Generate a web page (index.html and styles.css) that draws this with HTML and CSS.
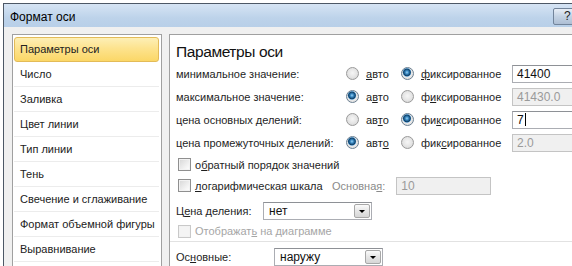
FILE: index.html
```html
<!DOCTYPE html>
<html lang="ru">
<head>
  <meta charset="UTF-8" />
  <title>Формат оси</title>
  <link rel="stylesheet" href="styles.css">
</head>
<body>

  <div class="dialog">
    <div class="titlebar">
      <span class="title">Формат оси</span>
      <span class="help">?</span>
    </div>

    <div class="content">
      <ul class="nav">
        <li class="active">Параметры оси</li>
        <li>Число</li>
        <li>Заливка</li>
        <li>Цвет линии</li>
        <li>Тип линии</li>
        <li>Тень</li>
        <li>Свечение и сглаживание</li>
        <li>Формат объемной фигуры</li>
        <li>Выравнивание</li>
      </ul>

      <div class="pane">
        <h1>Параметры оси</h1>

        <div class="bounds">
          <span class="label">минимальное значение:</span>
          <span class="opt"><i class="radio"></i><span><u>а</u>вто</span></span>
          <span class="opt"><i class="radio on"></i><span><u>ф</u>иксированное</span></span>
          <span class="field">41400</span>

          <span class="label">максимальное значение:</span>
          <span class="opt"><i class="radio on"></i><span>а<u>в</u>то</span></span>
          <span class="opt"><i class="radio"></i><span>ф<u>и</u>ксированное</span></span>
          <span class="field disabled">41430.0</span>

          <span class="label">цена основных делений:</span>
          <span class="opt"><i class="radio"></i><span>ав<u>т</u>о</span></span>
          <span class="opt"><i class="radio on"></i><span>фи<u>к</u>сированное</span></span>
          <span class="field">7<b class="caret"></b></span>

          <span class="label">цена промежуточных делений:</span>
          <span class="opt"><i class="radio on"></i><span>авт<u>о</u></span></span>
          <span class="opt"><i class="radio"></i><span>фик<u>с</u>ированное</span></span>
          <span class="field disabled">2.0</span>
        </div>

        <div class="check-row">
          <i class="checkbox"></i>
          <span>о<u>б</u>ратный порядок значений</span>
        </div>
        <div class="check-row">
          <i class="checkbox"></i>
          <span class="check-text"><u>л</u>огарифмическая шкала</span>
          <span class="muted">Основна<u>я</u>:</span>
          <span class="field small disabled">10</span>
        </div>

        <div class="select-row tick">
          <span class="select-label">Ц<u>е</u>на деления:</span>
          <span class="select">нет<i class="drop"></i></span>
        </div>
        <div class="check-row off">
          <i class="checkbox"></i>
          <span>Отображат<u>ь</u> на диаграмме</span>
        </div>

        <div class="separator"></div>

        <div class="select-row major">
          <span class="select-label">Ос<u>н</u>овные:</span>
          <span class="select">наружу<i class="drop"></i></span>
        </div>
      </div>
    </div>
  </div>

</body>
</html>
```

FILE: styles.css
```css
body {
  margin: 0;
  width: 572px;
  height: 266px;
  overflow: hidden;
  background: #fff;
  font-family: "Liberation Sans", Arial, sans-serif;
  font-size: 11px;
  color: #1e1e1e;
  white-space: nowrap;
}

u {
  text-decoration: underline;
  text-underline-offset: 1px;
}

.dialog {
  margin: 3px 0 0 3px;
  width: 640px;
  height: 320px;
  border: 1px solid #4d5866;
  border-right: none;
  background: #f0f0f0;
}

.titlebar {
  position: relative;
  height: 23px;
  display: flex;
  align-items: center;
  padding-left: 6px;
  background: linear-gradient(#d6e4f4, #bdd3ea 60%, #b8cfe8);
}

.title {
  font-size: 12px;
  color: #000;
  padding-top: 2px;
}

.help {
  position: absolute;
  left: 549px;
  top: 4px;
  width: 26px;
  height: 15px;
  border: 1px solid #72849a;
  border-radius: 2px;
  background: linear-gradient(#e8eef6, #c3d2e3 50%, #aebfd4);
  color: #222;
  font-size: 12px;
  line-height: 15px;
  padding-left: 10px;
  box-sizing: content-box;
}

.content {
  display: flex;
  align-items: flex-start;
  padding: 7px 0 0 8px;
}

/* left navigation list */
.nav {
  list-style: none;
  margin: 0;
  width: 145px;
  height: 260px;
  padding: 2px 2px 0 1px;
  background: #fff;
  border: 1px solid #a0a0a0;
  font-size: 11px;
}

.nav li {
  height: 24px;
  line-height: 24px;
  padding-left: 6px;
  border-bottom: 1px solid #ececec;
  color: #222;
}

.nav li.active {
  height: 23px;
  line-height: 23px;
  padding-left: 5px;
  border: 1px solid #e3bb58;
  border-radius: 3px;
  background: linear-gradient(#fdefb6, #fde38e 45%, #fbd767);
}

/* right pane */
.pane {
  flex: 1;
  height: 260px;
  margin-left: 7px;
  padding: 7px 0 0 6px;
  background: #fff;
  border: 1px solid #a0a0a0;
  border-right: none;
}

.pane h1 {
  margin: 0;
  font-size: 15.5px;
  letter-spacing: -0.4px;
  font-weight: normal;
  line-height: 20px;
  color: #111;
}

.bounds {
  display: grid;
  grid-template-columns: 170px 55px 111px 90px;
  grid-auto-rows: 23px;
  align-items: center;
}

.opt {
  display: flex;
  align-items: center;
  gap: 7px;
}

.radio {
  display: inline-block;
  flex: none;
  width: 13px;
  height: 13px;
  box-sizing: border-box;
  border-radius: 50%;
  border: 1px solid #9a9a9a;
  background: radial-gradient(circle at 50% 45%, #f6f6f6 0, #e4e4e4 55%, #cfcfcf 100%);
}

.radio.on {
  border-color: #6b7f91;
  background:
    radial-gradient(circle at 45% 40%, #9ad2f3 0, #3a8ac4 1.6px, #0f3f66 3.4px, #5d9ccc 4px, transparent 4.6px),
    radial-gradient(circle, #f6f6f6 0, #dadada 100%);
}

.field {
  display: flex;
  align-items: center;
  height: 18px;
  box-sizing: border-box;
  padding-left: 4px;
  border: 1px solid #abadb3;
  border-top-color: #8e9196;
  background: #fff;
  color: #111;
  font-size: 12px;
}

.field.disabled {
  background: #f0f0f0;
  border-color: #c4c4c4;
  color: #9a9a9a;
}

.field.small {
  width: 95px;
  margin-left: 7px;
}

.caret {
  display: inline-block;
  width: 1px;
  height: 13px;
  background: #000;
  margin-left: 1px;
}

.check-row {
  display: flex;
  align-items: center;
  height: 21px;
  padding-left: 2px;
  gap: 4px;
}

.checkbox {
  display: inline-block;
  flex: none;
  width: 13px;
  height: 13px;
  box-sizing: border-box;
  border: 1px solid #8f8f8f;
  background: linear-gradient(135deg, #d6d6d6, #f4f4f4 70%, #fff);
  box-shadow: inset 0 0 0 1px #f2f2f2;
}

.check-text {
  width: 133px;
}

.muted {
  color: #8a8a8a;
}

.check-row.off {
  height: 16px;
  color: #a6a6a6;
}

.check-row.off .checkbox {
  border-color: #c9c9c9;
  background: #f4f4f4;
}

.select-row {
  display: flex;
  align-items: center;
}

.select-row.tick {
  height: 24px;
  margin-top: 3px;
}

.select-row.tick .select-label {
  width: 87px;
}

.select-row.major {
  height: 18px;
  margin-top: 6px;
}

.select-row.major .select-label {
  width: 98px;
}

.select {
  position: relative;
  display: flex;
  align-items: center;
  width: 109px;
  height: 18px;
  box-sizing: border-box;
  padding-left: 5px;
  border: 1px solid #abadb3;
  border-top-color: #8e9196;
  background: #fff;
  color: #111;
  font-size: 12px;
}

.drop {
  position: absolute;
  right: 1px;
  top: 1px;
  width: 16px;
  height: 14px;
  box-sizing: border-box;
  border: 1px solid #a7a7a7;
  border-radius: 2px;
  background: linear-gradient(#fbfbfb, #e6e6e6 50%, #d6d6d6);
}

.drop::after {
  content: "";
  position: absolute;
  left: 4px;
  top: 5px;
  border-left: 3px solid transparent;
  border-right: 3px solid transparent;
  border-top: 3px solid #000;
}

.separator {
  height: 1px;
  margin-top: 2px;
  margin-left: -6px;
  background: #e2e2e2;
}
```
